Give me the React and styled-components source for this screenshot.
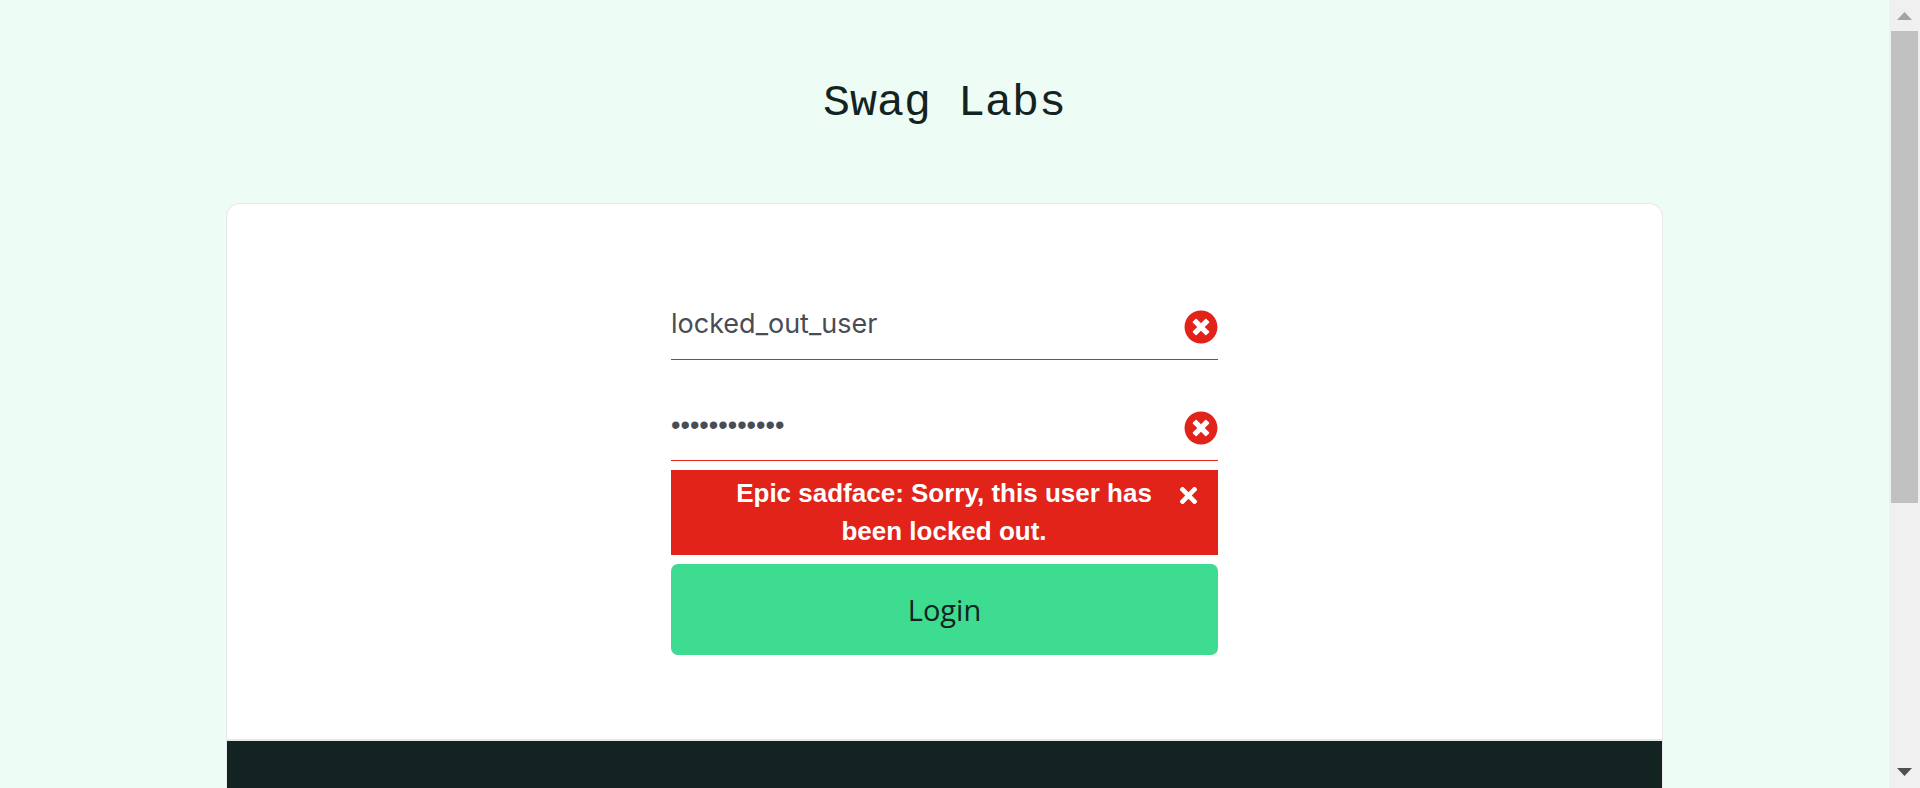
import React from "react";
import styled, { createGlobalStyle } from "styled-components";
import { FaTimes, FaTimesCircle } from "react-icons/fa";

const GlobalStyle = createGlobalStyle`
  *, *::before, *::after { box-sizing: border-box; }
  body { margin: 0; background: #edfcf5; }
`;

const Window = styled.div`
  display: flex;
  height: 100vh;
  overflow: hidden;
  background: #edfcf5;
`;

const Page = styled.main`
  flex: 1;
  display: flex;
  flex-direction: column;
  align-items: center;
`;

const Title = styled.h1`
  margin: 0;
  padding: 74px 0 69px;
  font: 400 45px/60px "Liberation Mono", monospace;
  color: #132322;
`;

const Card = styled.section`
  flex: 1;
  display: flex;
  flex-direction: column;
  width: calc(100% - 452px);
  min-width: 600px;
  background: #fff;
  border: 1px solid #e8e9e8;
  border-bottom: 0;
  border-radius: 14px 14px 0 0;
`;

const Form = styled.form`
  display: flex;
  flex-direction: column;
  width: 547px;
  margin: 0 auto;
  padding: 88px 0 84px;
`;

const Field = styled.label`
  display: flex;
  align-items: center;
  height: 68px;
  padding-top: 2px;
  margin-bottom: ${(p) => (p.$last ? 9 : 33)}px;
  border-bottom: 1px solid #e2231a;
  color: #e2231a;
  svg { flex: none; }
`;

const Input = styled.input`
  flex: 1;
  min-width: 0;
  padding: 0 0 6px;
  border: 0;
  outline: 0;
  background: transparent;
  color: #484c55;
  font: 400 27px/36px ${(p) => (p.type === "password" ? '"Liberation Sans"' : "Inter")}, sans-serif;
`;

const ErrorBox = styled.div`
  display: flex;
  height: 85px;
  margin-bottom: 9px;
  padding: 4px 17px 0 61px;
  background: #e2231a;
  color: #fff;
`;

const ErrorText = styled.h3`
  flex: 1;
  margin: 0;
  padding-right: 20px;
  text-align: center;
  font: 700 26px/38px "Liberation Sans", Arial, sans-serif;
`;

const CloseButton = styled.button`
  display: flex;
  align-self: flex-start;
  margin-top: 9px;
  padding: 0;
  border: 0;
  background: none;
  color: inherit;
`;

const LoginButton = styled.button`
  height: 91px;
  padding: 0;
  border: 0;
  border-radius: 7px;
  background: #3ddc91;
  color: #132322;
  font: 400 29px/40px "Open Sans", sans-serif;
`;

const Credentials = styled.footer`
  flex: 1;
  border-top: 2px solid #e5e9e8;
  background: #132322;
`;

const Scrollbar = styled.div`
  flex: none;
  display: flex;
  flex-direction: column;
  align-items: center;
  width: 31px;
  background: #f0f0f0;
`;

const Arrow = styled.svg`
  flex: none;
  width: 31px;
  height: 31px;
`;

const Track = styled.div`
  flex: 1;
  width: 27px;
`;

const Thumb = styled.div`
  height: 65%;
  background: #c1c1c1;
`;

export default function App() {
  return (
    <Window>
      <GlobalStyle />
      <Page>
        <Title>Swag Labs</Title>
        <Card>
          <Form onSubmit={(e) => e.preventDefault()}>
            <Field>
              <Input type="text" aria-label="Username" defaultValue="locked_out_user" />
              <FaTimesCircle size={34} />
            </Field>
            <Field $last>
              <Input type="password" aria-label="Password" defaultValue="secret_sauce" />
              <FaTimesCircle size={34} />
            </Field>
            <ErrorBox role="alert">
              <ErrorText>Epic sadface: Sorry, this user has been locked out.</ErrorText>
              <CloseButton type="button" aria-label="Dismiss error">
                <FaTimes size={25} />
              </CloseButton>
            </ErrorBox>
            <LoginButton type="submit">Login</LoginButton>
          </Form>
          <Credentials />
        </Card>
      </Page>
      <Scrollbar aria-hidden="true">
        <Arrow viewBox="0 0 31 31">
          <path d="M8 20 15.500 12 23 20Z" fill="#a3a3a3" />
        </Arrow>
        <Track>
          <Thumb />
        </Track>
        <Arrow viewBox="0 0 31 31">
          <path d="M8 11h15l-7.500 8Z" fill="#505050" />
        </Arrow>
      </Scrollbar>
    </Window>
  );
}
